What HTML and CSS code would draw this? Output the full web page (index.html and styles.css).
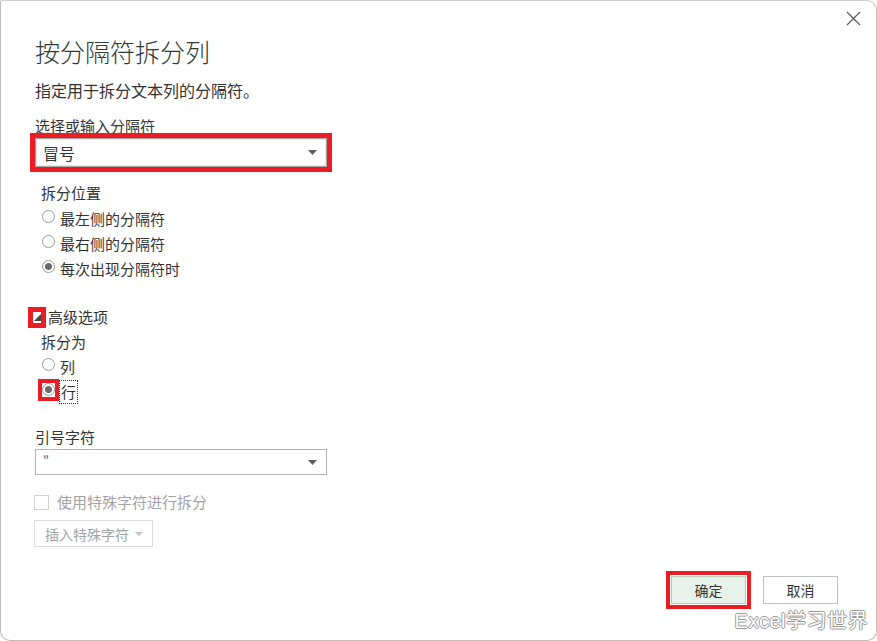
FILE: index.html
```html
<!DOCTYPE html>
<html lang="zh">
<head>
<meta charset="utf-8">
<title>按分隔符拆分列</title>
<link rel="stylesheet" href="styles.css">
</head>
<body>
<div class="dialog">
  <button class="close" aria-label="关闭">
    <svg width="15" height="15" viewBox="0 0 15 15"><path d="M1 1L14 14M14 1L1 14" stroke="#5a5a5a" stroke-width="1.2" fill="none"/></svg>
  </button>

  <h1 class="title">按分隔符拆分列</h1>
  <p class="desc">指定用于拆分文本列的分隔符。</p>

  <div class="label">选择或输入分隔符</div>
  <div class="select select-main mark">
    <span class="select-text">冒号</span>
    <svg class="caret" width="9" height="5" viewBox="0 0 9 5"><path d="M0 0H9L4.5 5Z" fill="#5f5f5f"/></svg>
  </div>

  <div class="group group-pos">
    <div class="group-label">拆分位置</div>
    <div class="radio"><span class="circle"></span><span>最左侧的分隔符</span></div>
    <div class="radio"><span class="circle"></span><span>最右侧的分隔符</span></div>
    <div class="radio"><span class="circle checked"></span><span>每次出现分隔符时</span></div>
  </div>

  <div class="advanced">
    <span class="tri mark"><svg width="7" height="7" viewBox="0 0 7 7"><path d="M7 0V7H0Z" fill="#454545"/></svg></span>
    <span>高级选项</span>
  </div>

  <div class="group group-split">
    <div class="group-label">拆分为</div>
    <div class="radio"><span class="circle"></span><span>列</span></div>
    <div class="radio"><span class="mark-box"><span class="circle checked"></span></span><span class="focus">行</span></div>
  </div>

  <div class="label label-quote">引号字符</div>
  <div class="select select-quote">
    <span class="select-text quote">"</span>
    <svg class="caret" width="9" height="5" viewBox="0 0 9 5"><path d="M0 0H9L4.5 5Z" fill="#5f5f5f"/></svg>
  </div>

  <div class="check-row">
    <span class="checkbox"></span>
    <span>使用特殊字符进行拆分</span>
  </div>

  <div class="insert-btn">
    <span>插入特殊字符</span>
    <svg width="8" height="4" viewBox="0 0 8 4"><path d="M0 0H8L4 4Z" fill="#c4c4c4"/></svg>
  </div>

  <div class="footer">
    <button class="btn btn-ok">确定</button>
    <button class="btn btn-cancel">取消</button>
  </div>

  <div class="watermark">Excel学习世界</div>
</div>
</body>
</html>
```

FILE: styles.css
```css
html, body {
  margin: 0;
  padding: 0;
  background: #ffffff;
}

body {
  font-family: "Noto Sans CJK SC", "Noto Sans", sans-serif;
  font-size: 15px;
  color: #333333;
}

.dialog {
  box-sizing: border-box;
  width: 877px;
  height: 641px;
  border: 1px solid #bdbdbd;
  border-top-color: #cfcfcf;
  border-radius: 2px 10px 10px 10px;
  background: #ffffff;
  display: flex;
  flex-direction: column;
  align-items: flex-start;
  padding: 34px 38px 36px 34px;
  position: relative;
}

.close {
  position: absolute;
  top: 9px;
  right: 14px;
  width: 17px;
  height: 17px;
  padding: 1px;
  border: 0;
  background: transparent;
  display: flex;
}

.title {
  margin: 0;
  font-size: 25px;
  line-height: 32px;
  font-weight: 300;
  color: #2d3b38;
}

.desc {
  margin: 13px 0 0;
  line-height: 20px;
  font-size: 16px;
}

.label {
  margin-top: 16px;
  line-height: 20px;
}

.select {
  box-sizing: border-box;
  width: 292px;
  border: 1px solid #a9a9a9;
  box-shadow: inset 0 0 0 1px #e6e6e6;
  display: flex;
  align-items: center;
  justify-content: space-between;
  padding: 0 9px 0 7px;
  background: #fff;
}

.select-main {
  margin-top: 2px;
  height: 29px;
}

.select-main .select-text {
  font-size: 16px;
}

.mark {
  outline: 5px solid #ec1c24;
}

.select-text {
  line-height: 20px;
}

.caret {
  display: block;
}

.group {
  padding-left: 6px;
  display: flex;
  flex-direction: column;
}

.group-pos {
  margin-top: 16px;
}

.group-label {
  line-height: 20px;
}

.radio {
  display: flex;
  align-items: center;
  height: 25px;
  padding-left: 1px;
}

.group .group-label + .radio {
  margin-top: 3px;
}

.group-split .group-label + .radio {
  margin-top: 2px;
}

.circle {
  box-sizing: border-box;
  width: 13px;
  height: 13px;
  border: 1px solid #9a9a9a;
  border-radius: 50%;
  background: #fff;
  margin-right: 5px;
  margin-bottom: 4px;
  display: flex;
  align-items: center;
  justify-content: center;
}

.circle.checked::after {
  content: "";
  width: 7px;
  height: 7px;
  border-radius: 50%;
  background: #6b6b6b;
}

.mark-box {
  display: flex;
  align-items: center;
  justify-content: center;
  width: 13px;
  height: 14px;
  margin-right: 5px;
  margin-bottom: 4px;
  outline: 4px solid #ec1c24;
}

.mark-box .circle {
  margin: 0;
}

.focus {
  outline: 1px dotted #333;
  line-height: 22px;
  padding: 0 1px;
}

.advanced {
  margin-top: 26px;
  line-height: 20px;
  display: flex;
  align-items: center;
}

.tri {
  display: flex;
  align-items: flex-end;
  justify-content: flex-end;
  width: 8px;
  height: 11px;
  margin-left: -2px;
  margin-right: 7px;
  padding-bottom: 2px;
  box-sizing: border-box;
}

.group-split {
  margin-top: 5px;
}

.label-quote {
  margin-top: 23px;
}

.select-quote {
  margin-top: 2px;
  height: 26px;
  box-shadow: none;
  border-color: #b4b4b4;
}

.quote {
  color: #3d6ea6;
  font-size: 13px;
}

.check-row {
  margin-top: 17px;
  display: flex;
  align-items: center;
  line-height: 20px;
  color: #a3a3a3;
}

.checkbox {
  box-sizing: border-box;
  width: 15px;
  height: 15px;
  border: 1px solid #d2d2d2;
  margin-left: -1px;
  margin-right: 8px;
}

.insert-btn {
  box-sizing: border-box;
  margin-top: 8px;
  width: 119px;
  height: 27px;
  border: 1px solid #dcdcdc;
  display: flex;
  align-items: center;
  justify-content: space-between;
  padding: 0 9px 0 10px;
  color: #a3a3a3;
  font-size: 14px;
  margin-left: -1px;
}

.footer {
  margin-top: auto;
  align-self: stretch;
  display: flex;
  justify-content: flex-end;
  gap: 17px;
}

.btn {
  box-sizing: border-box;
  width: 75px;
  height: 28px;
  font-family: "Noto Sans CJK SC", "Noto Sans", sans-serif;
  font-size: 14px;
  color: #333;
  padding: 0;
}

.btn-ok {
  background: #e6f2ea;
  border: 1px solid #a8d3b5;
  outline: 4px solid #ec1c24;
  outline-offset: 1px;
}

.btn-cancel {
  background: #fff;
  border: 1px solid #c3c3c3;
}

.watermark {
  position: absolute;
  right: 8px;
  bottom: 7px;
  font-family: "Liberation Sans", "Noto Sans CJK SC", sans-serif;
  font-size: 20px;
  line-height: 24px;
  color: #ffffff;
  letter-spacing: 0.5px;
  text-shadow: 1px 0 0 #9a9a9a, -1px 0 0 #9a9a9a, 0 1px 0 #9a9a9a, 0 -1px 0 #9a9a9a;
}
```
